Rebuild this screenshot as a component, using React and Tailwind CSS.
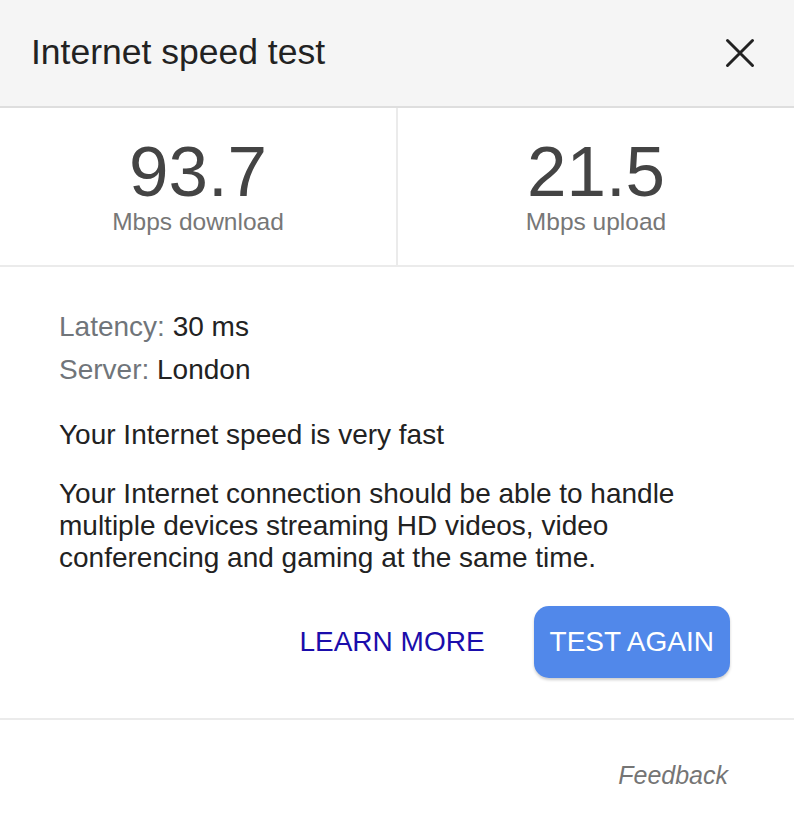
import React from 'react';

const Stat = ({ value, label }) => (
  <div className="flex flex-1 flex-col items-center justify-center pt-[4px]">
    <div className="text-[71px] leading-[60px] text-[#444444]">{value}</div>
    <div className="mt-[7px] text-[24.5px] leading-[26px] text-[#777777]">{label}</div>
  </div>
);

export default function App() {
  return (
    <div className="h-[834px] w-[794px] bg-white font-['Liberation_Sans',Arial,sans-serif]">
      {/* header */}
      <header className="flex h-[108px] items-center justify-between border-b-2 border-[#dedede] bg-[#f5f5f5] pl-[31px] pr-[34px]">
        <h1 className="text-[35.5px] leading-none text-[#222222]">Internet speed test</h1>
        <button className="flex h-[40px] w-[40px] items-center justify-center">
          <svg width="30" height="30" viewBox="0 0 30 30" fill="none" stroke="#222222" strokeWidth="3" strokeLinecap="round">
            <path d="M2.5 2.5 L27.5 27.5 M27.5 2.5 L2.5 27.5" />
          </svg>
        </button>
      </header>

      {/* results */}
      <div className="flex h-[159px] border-b-2 border-[#ebebeb]">
        <Stat value="93.7" label="Mbps download" />
        <div className="w-[2px] bg-[#ebebeb]" />
        <Stat value="21.5" label="Mbps upload" />
      </div>

      {/* details */}
      <div className="pl-[59px] pr-[64px] pt-[38px] text-[28px] text-[#222222]">
        <div className="leading-[43px]">
          <span className="text-[#70757a]">Latency:</span> 30 ms
        </div>
        <div className="leading-[43px]">
          <span className="text-[#70757a]">Server:</span> London
        </div>
        <p className="mt-[28px] leading-[32px]">Your Internet speed is very fast</p>
        <p className="mt-[27px] leading-[32px]">
          Your Internet connection should be able to handle multiple devices streaming HD videos, video
          conferencing and gaming at the same time.
        </p>

        <div className="mt-[32px] flex items-center justify-end gap-[49px]">
          <a className="text-[28px] leading-none text-[#1a0dab]">LEARN MORE</a>
          <button className="h-[72px] rounded-[15px] bg-[#5188ea] px-[16px] text-[28px] leading-none text-white shadow-[0_2px_3px_rgba(0,0,0,0.2)]">
            TEST AGAIN
          </button>
        </div>
      </div>

      <div className="mt-[40px] border-t-2 border-[#ebebeb]" />

      <div className="flex justify-end pr-[66px] pt-[43px]">
        <span className="text-[25px] italic leading-none text-[#757575]">Feedback</span>
      </div>
    </div>
  );
}
